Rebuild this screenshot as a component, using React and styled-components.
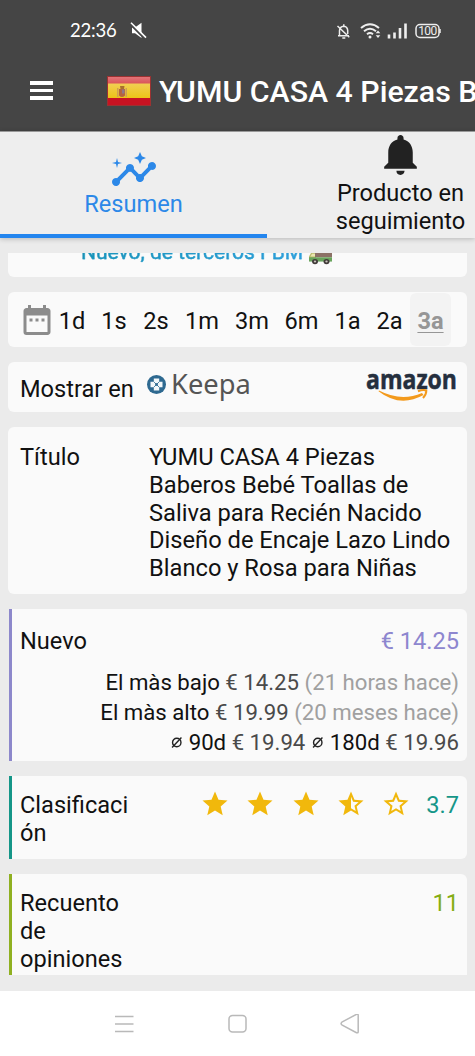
import styled, { createGlobalStyle } from "styled-components";
import {
  MdDateRange,
  MdInsights,
  MdNotifications,
  MdStar,
  MdStarBorder,
  MdStarHalf,
} from "react-icons/md";

const ranges = ["1d", "1s", "2s", "1m", "3m", "6m", "1a", "2a", "3a"];
const rangeWidths = [42, 42, 42, 50, 50, 49, 43, 41, 41];

const GlobalStyle = createGlobalStyle`
  * {
    box-sizing: border-box;
  }
  body {
    margin: 0;
    overflow: hidden;
    background: #ebebeb;
    font-family: Roboto, "Noto Sans", sans-serif;
    font-size: 23.6px;
    line-height: 27.8px;
    color: #111;
  }
  svg {
    display: block;
    flex-shrink: 0;
  }
`;

export default function App() {
  return (
    <Phone>
      <GlobalStyle />
      <Header>
        <StatusBar>
          <Clock>22:36</Clock>
          <MutedIcon />
          <StatusIcons />
        </StatusBar>
        <TitleBar>
          <MenuButton>
            <span />
            <span />
            <span />
          </MenuButton>
          <SpainFlag />
          <PageTitle>YUMU CASA 4 Piezas Baberos</PageTitle>
        </TitleBar>
      </Header>

      <Tabs>
        <Tab $active $top={14}>
          <MdInsights size={48} />
          <span>Resumen</span>
        </Tab>
        <Tab $top={-2}>
          <MdNotifications size={49} color="#222" />
          <span>
            Producto en
            <br />
            seguimiento
          </span>
        </Tab>
      </Tabs>

      <Content>
        <ClippedCard>
          <Seller>Nuevo, de terceros FBM</Seller>
          <TruckIcon />
        </ClippedCard>

        <RangeCard>
          <MdDateRange size={36} color="#8c8c8c" />
          <Ranges>
            {ranges.map((range, i) => (
              <Range key={range} $width={rangeWidths[i]} $active={range === "3a"}>
                {range}
              </Range>
            ))}
          </Ranges>
        </RangeCard>

        <ShopCard>
          <ShopLabel>Mostrar en</ShopLabel>
          <KeepaLogo />
          <AmazonLogo />
        </ShopCard>

        <Card $height={167} $top={17}>
          <Label $width={129}>Título</Label>
          <ProductTitle>
            YUMU CASA 4 Piezas Baberos Bebé Toallas de Saliva para Recién Nacido
            Diseño de Encaje Lazo Lindo Blanco y Rosa para Niñas
          </ProductTitle>
        </Card>

        <Card $height={152} $accent="#8d88cb" $column $top={19}>
          <PriceHead>
            <span>Nuevo</span>
            <Value $color="#8d86cf">€ 14.25</Value>
          </PriceHead>
          <Stats>
            <div>
              El màs bajo <Price>€ 14.25</Price> <Ago>(21 horas hace)</Ago>
            </div>
            <div>
              El màs alto <Price>€ 19.99</Price> <Ago>(20 meses hace)</Ago>
            </div>
            <div>
              <AverageIcon /> 90d <Price>€ 19.94</Price> <AverageIcon /> 180d{" "}
              <Price>€ 19.96</Price>
            </div>
          </Stats>
        </Card>

        <Card $height={83} $accent="#159688">
          <Label $width={110}>Clasificación</Label>
          <Rating>
            <MdStar size={30} />
            <MdStar size={30} />
            <MdStar size={30} />
            <MdStarHalf size={30} />
            <MdStarBorder size={30} />
          </Rating>
          <Value $color="#159688">3.7</Value>
        </Card>

        <Card $height={101} $accent="#8fb021" $square>
          <Label $width={110}>Recuento de opiniones</Label>
          <Value $color="#85ad14">11</Value>
        </Card>
      </Content>

      <NavBar>
        <svg width="20" height="20" viewBox="0 0 20 20" stroke="#b9b9b9" strokeWidth="1.5">
          <path d="M1 2.500h18.500M1 10h18.500M1 17.500h18.500" />
        </svg>
        <svg width="20" height="20" viewBox="0 0 20 20" fill="none" stroke="#b9b9b9" strokeWidth="1.5">
          <rect x="2" y="1.500" width="17" height="16.500" rx="3.500" />
        </svg>
        <svg width="20" height="20" viewBox="0 0 20 20" fill="none" stroke="#b9b9b9" strokeWidth="1.5">
          <path d="M1.800 8.200 16.500.3q1.700-.6 1.700 1v16.400q0 1.600-1.700 1L1.800 10.800q-1.500-1.300 0-2.600Z" />
        </svg>
      </NavBar>
    </Phone>
  );
}

function MutedIcon() {
  return (
    <svg width="17" height="17" viewBox="0 0 17 17">
      <path d="M2 5.500h3L11.500.8V16L5 11.300H2z" fill="#fff" />
      <path d="M0 1.800 15 17" stroke="#454545" strokeWidth="2" />
      <path d="M1 .8 16 15.600" stroke="#fff" strokeWidth="1.600" />
    </svg>
  );
}

function StatusIcons() {
  return (
    <svg width="106" height="20" viewBox="0 0 106 20" fill="none" stroke="#eee" strokeWidth="1.500">
      {/* silent bell */}
      <path d="M3 14.800h11M4.500 14.500V9.800Q4.500 5.600 8.800 5.200Q12.500 5.600 12.700 9.500v3.500M8.800 5V3.200M7.300 17h3M2.500 5 14.300 16.300" />
      {/* wifi */}
      <path d="M26 7q9-7.500 18 0M29 10.200q6-4.800 12 0M32 13.200q3-2.200 6 0" strokeWidth="2" />
      <circle cx="35" cy="16" r="1.500" fill="#eee" stroke="none" />
      <path d="m40.700 12.300 2.300-2.800 2.300 2.800zM40.700 14.200l2.300 2.800 2.300-2.800z" fill="#eee" stroke="none" />
      {/* signal */}
      <path d="M54 17.500v-4M59.500 17.500v-6M65 17.500V7M70.500 17.500V2.500" strokeWidth="2.600" />
      {/* battery */}
      <rect x="81" y="3.500" width="23" height="13" rx="4" />
      <path d="M105 8v4" />
      <text x="92.500" y="14.300" textAnchor="middle" fontSize="12" letterSpacing="-.5" fill="#eee" stroke="none">
        100
      </text>
    </svg>
  );
}

function SpainFlag() {
  return (
    <svg width="44" height="30" viewBox="0 0 44 30">
      <defs>
        <linearGradient id="flagTop" x1="0" y1="0" x2="0" y2="1">
          <stop offset="0" stopColor="#e37377" />
          <stop offset="1" stopColor="#d85357" />
        </linearGradient>
        <linearGradient id="flagMid" x1="0" y1="0" x2="0" y2="1">
          <stop offset="0" stopColor="#f1cf53" />
          <stop offset="1" stopColor="#ecc417" />
        </linearGradient>
      </defs>
      <rect width="44" height="30" fill="#9b3232" />
      <rect x="1" y="1" width="42" height="7" fill="url(#flagTop)" />
      <rect x="1" y="7.500" width="42" height="14.500" fill="url(#flagMid)" />
      <rect x="1" y="22" width="42" height="7" fill="#c81322" />
      <path d="M10 12h1.500v9H10zM18.500 12H20v9h-1.500z" fill="#cfa052" />
      <path d="M12 13h6v6.500q-3 3-6 0z" fill="#b5643f" />
      <path d="M13 10h4.500l-.5 3h-3.500z" fill="#a9702d" />
      <path d="M15 13.500h2.500v4H15z" fill="#8d7888" />
    </svg>
  );
}

function TruckIcon() {
  return (
    <svg width="25" height="12" viewBox="0 0 25 14" preserveAspectRatio="none">
      <path d="M1 4 3 0h5v9H1z" fill="#b9ba6c" />
      <path d="M7 0h17v5H7z" fill="#8c7166" />
      <path d="M1 5h23v5H1z" fill="#69a45c" />
      <path d="M2.500 4 4 1h3v3z" fill="#e9e6b0" />
      <circle cx="7" cy="10" r="3" fill="#403b38" />
      <circle cx="18.500" cy="10" r="3" fill="#403b38" />
      <circle cx="7" cy="10" r="1.200" fill="#c9c2bb" />
      <circle cx="18.500" cy="10" r="1.200" fill="#c9c2bb" />
    </svg>
  );
}

function AverageIcon() {
  return (
    <AverageSvg width="13.5" height="13" viewBox="0 0 12 13" fill="none" stroke="#222" strokeWidth="1.400">
      <circle cx="6" cy="6.500" r="4.200" />
      <path d="M1.300 11.500 10.700 1.500" />
    </AverageSvg>
  );
}

function KeepaLogo() {
  return (
    <Keepa>
      <svg width="19" height="19" viewBox="0 0 19 19">
        <circle cx="9.500" cy="9.500" r="9.500" fill="#2e6990" />
        <path d="M6.800 3.500h5.400v3.300h3.300v5.400h-3.300v3.300H6.800v-3.300H3.500V6.800h3.300z" fill="#f4f8fa" />
        <path d="M8.200 8.200h2.600v2.600H8.200z" fill="#2e6990" />
        <path d="M6.800 6.800l5.400 5.400M12.200 6.800l-5.400 5.400" stroke="#2e6990" strokeWidth=".8" />
      </svg>
      Keepa
    </Keepa>
  );
}

function AmazonLogo() {
  return (
    <svg width="94" height="36" viewBox="0 0 94 36" overflow="visible">
      <text
        x="2"
        y="19"
        fontFamily="Open Sans, sans-serif"
        fontWeight="700"
        fontSize="26.500"
        fill="#252f3e"
        stroke="#252f3e"
        strokeWidth=".5"
        textLength="91"
        lengthAdjust="spacingAndGlyphs"
      >
        amazon
      </text>
      <path d="M15 20.500q22 11.500 43 2.500l1.500 2Q36 38 14.500 21.200Z" fill="#f39a1c" />
      <path d="M54 21.300q5-2 8.300-.8 .2 3.500-3.300 7.500" fill="none" stroke="#f39a1c" strokeWidth="2" />
    </svg>
  );
}

const Phone = styled.div`
  width: 475px;
  height: 1056px;
  display: flex;
  flex-direction: column;
  overflow: hidden;
`;

const Header = styled.header`
  height: 131px;
  flex-shrink: 0;
  background: #454545;
  color: #fff;
`;

const StatusBar = styled.div`
  height: 61px;
  padding: 0 34px 0 70px;
  display: flex;
  align-items: center;
  gap: 13px;

  svg:last-child {
    margin-left: auto;
  }
`;

const Clock = styled.span`
  width: 47px;
  font-family: Lato, sans-serif;
  font-size: 18.500px;
  letter-spacing: -0.2px;
  white-space: nowrap;
`;

const TitleBar = styled.div`
  height: 59px;
  padding-left: 30px;
  display: flex;
  align-items: center;
`;

const MenuButton = styled.div`
  width: 23px;
  flex-shrink: 0;
  margin-right: 54px;
  display: flex;
  flex-direction: column;
  gap: 4px;

  span {
    height: 3.500px;
    background: #fff;
  }
`;

const PageTitle = styled.h1`
  margin: 2px 0 0 8px;
  font-size: 30.300px;
  line-height: 36px;
  font-weight: 500;
  white-space: nowrap;
`;

const Tabs = styled.nav`
  height: 107px;
  flex-shrink: 0;
  display: flex;
  background: #eee;
  border-top: 1px solid #999;
  box-shadow: 0 1px 5px rgba(0, 0, 0, 0.22);
`;

const Tab = styled.div`
  width: 267px;
  height: 106px;
  flex-shrink: 0;
  padding-top: ${(props) => (props.$top > 0 ? props.$top : 0)}px;
  display: flex;
  flex-direction: column;
  align-items: center;
  text-align: center;
  color: ${(props) => (props.$active ? "#2c88e8" : "#111")};
  border-bottom: ${(props) => (props.$active ? "4px solid #2385ee" : "0")};

  svg {
    margin-top: ${(props) => (props.$top < 0 ? props.$top : 0)}px;
    margin-bottom: ${(props) => (props.$active ? -3 : 1)}px;
  }
`;

const Content = styled.main`
  height: 753px;
  flex-shrink: 0;
  padding: 15px 8px 0;
  display: flex;
  flex-direction: column;
  gap: 15px;
  overflow: hidden;
`;

const Card = styled.section`
  height: ${(props) => props.$height}px;
  flex-shrink: 0;
  margin-left: ${(props) => (props.$accent ? 1 : 0)}px;
  padding: ${(props) => props.$top || 16}px ${(props) => (props.$accent ? 8 : 12)}px 0
    ${(props) => (props.$accent ? 8 : 12)}px;
  display: flex;
  flex-direction: ${(props) => (props.$column ? "column" : "row")};
  background: #fafafa;
  border-left: ${(props) => (props.$accent ? `3px solid ${props.$accent}` : "0")};
  border-radius: ${(props) =>
    props.$accent ? `0 6px ${props.$square ? 0 : 6}px 0` : "6px"};
`;

const ClippedCard = styled(Card).attrs({ $height: 24 })`
  padding: 0 0 0 73px;
  align-items: flex-start;
  border-radius: 0 0 6px 6px;
  overflow: hidden;
  gap: 5px;
`;

const Seller = styled.span`
  margin-top: -15px;
  height: 28px;
  line-height: 28px;
  font-size: 21px;
  background: linear-gradient(90deg, #1793b5, #2da1e0);
  background-clip: text;
  color: transparent;
  -webkit-text-stroke: 0.3px #2299c9;
  white-space: nowrap;
`;

const RangeCard = styled(Card).attrs({ $height: 55 })`
  padding: 1px 0 1px 11px;
  align-items: center;
`;

const Ranges = styled.div`
  margin-left: -4px;
  display: flex;
`;

const Range = styled.span`
  width: ${(props) => props.$width}px;
  height: 53px;
  line-height: 56px;
  text-align: center;
  border-radius: 6px;
  background: ${(props) => (props.$active ? "#f3f3f3" : "transparent")};
  color: ${(props) => (props.$active ? "#969696" : "#111")};
  font-weight: ${(props) => (props.$active ? 700 : 400)};
  text-decoration: ${(props) => (props.$active ? "underline" : "none")};
  text-decoration-thickness: 1px;
  text-underline-offset: 3px;
`;

const ShopCard = styled(Card).attrs({ $height: 50 })`
  padding: 0 9px 0 12px;

  > svg {
    margin: 8px 0 0 auto;
  }
`;

const ShopLabel = styled.span`
  width: 127px;
  padding-top: 14px;
`;

const Keepa = styled.div`
  height: 44px;
  display: flex;
  align-items: center;
  gap: 5px;
  font-family: "Noto Sans", sans-serif;
  font-size: 27.300px;
  color: #555;
`;

const Label = styled.div`
  width: ${(props) => props.$width}px;
  flex-shrink: 0;
  word-break: break-word;
`;

const ProductTitle = styled.div`
  flex: 1;
  font-size: 23.700px;
`;

const PriceHead = styled.div`
  display: flex;
  justify-content: space-between;
`;

const Value = styled.span`
  margin-left: auto;
  color: ${(props) => props.$color};
`;

const Stats = styled.div`
  margin-top: 11px;
  font-size: 22.200px;
  line-height: 30px;
  text-align: right;
  white-space: nowrap;
`;

const Price = styled.span`
  color: #4a4a4a;
`;

const Ago = styled.span`
  color: #a0a0a0;
`;

const AverageSvg = styled.svg`
  display: inline-block;
  vertical-align: 1px;
`;

const Rating = styled.div`
  margin: -3px 0 0 70px;
  display: flex;
  gap: 15.300px;
  color: #f1b80c;
`;

const NavBar = styled.footer`
  height: 65px;
  flex-shrink: 0;
  padding-left: 114px;
  display: flex;
  align-items: center;
  gap: 93px;
  background: #fff;
`;
